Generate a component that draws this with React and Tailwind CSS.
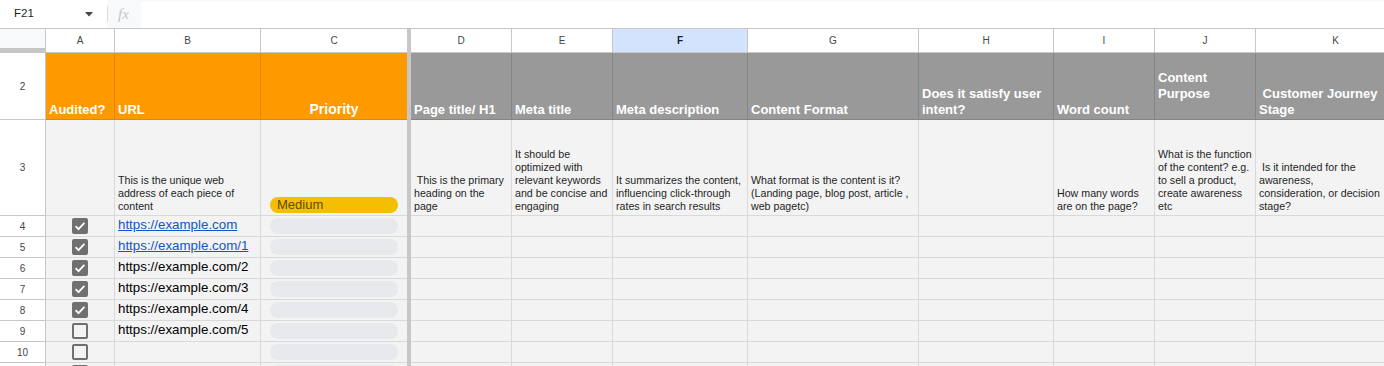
import React from "react";

const FONT = { fontFamily: '"Liberation Sans", Arial, sans-serif' };

const cols = [
  { key: "A", w: "w-[69px]" },
  { key: "B", w: "w-[146px]" },
  { key: "C", w: "w-[146px]" },
  { key: "D", w: "w-[101px]" },
  { key: "E", w: "w-[101px]" },
  { key: "F", w: "w-[135px]" },
  { key: "G", w: "w-[171px]" },
  { key: "H", w: "w-[135px]" },
  { key: "I", w: "w-[101px]" },
  { key: "J", w: "w-[101px]" },
  { key: "K", w: "w-[160px]" },
];

const headers = {
  A: ["Audited?"],
  B: ["URL"],
  C: ["Priority"],
  D: ["Page title/ H1"],
  E: ["Meta title"],
  F: ["Meta description"],
  G: ["Content Format"],
  H: ["Does it satisfy user", "intent?"],
  I: ["Word count"],
  J: ["Content", "Purpose", " "],
  K: [" Customer Journey", "Stage"],
};

const notes = {
  A: [],
  B: ["This is the unique web", "address of each piece of", "content"],
  C: null,
  D: [" This is the primary", "heading on the", "page"],
  E: ["It should be", "optimized with", "relevant keywords", "and be concise and", "engaging"],
  F: ["It summarizes the content,", "influencing click-through", "rates in search results"],
  G: ["What format is the content is it?", "(Landing page, blog post, article ,", "web pagetc)"],
  H: [],
  I: ["How many words", "are on the page?"],
  J: ["What is the function", "of the content? e.g.", "to sell a product,", "create awareness", "etc"],
  K: [" Is it intended for the", "awareness,", "consideration, or decision", "stage?"],
};

const dataRows = [
  { n: 4, checked: true, url: "https://example.com", link: true },
  { n: 5, checked: true, url: "https://example.com/1", link: true },
  { n: 6, checked: true, url: "https://example.com/2" },
  { n: 7, checked: true, url: "https://example.com/3" },
  { n: 8, checked: true, url: "https://example.com/4" },
  { n: 9, checked: false, url: "https://example.com/5" },
  { n: 10, checked: false, url: "" },
  { n: "", checked: false, url: "" },
];

function Divider() {
  return <div className="w-[4px] shrink-0 bg-[#c7c7c7]" />;
}

function RowNum({ n, className = "" }) {
  return (
    <div
      className={`w-[46px] shrink-0 flex items-center justify-center bg-white border-r border-b border-[#c7c7c7] text-[10px] text-[#444746] ${className}`}
    >
      {n}
    </div>
  );
}

function Checkbox({ checked }) {
  if (checked) {
    return (
      <div className="w-[16px] h-[16px] rounded-[2px] bg-[#707070] flex items-center justify-center">
        <svg width="16" height="16" viewBox="0 0 16 16">
          <path d="M3.6 8.2l2.9 2.9 5.9-6.2" fill="none" stroke="white" strokeWidth="1.8" />
        </svg>
      </div>
    );
  }
  return <div className="w-[16px] h-[16px] rounded-[2px] border-2 border-[#707070] bg-transparent" />;
}

export default function App() {
  return (
    <div className="w-[1384px] h-[366px] overflow-hidden bg-white text-black" style={FONT}>
      {/* Formula bar */}
      <div className="h-[29px] flex border-b border-[#c7c7c7] bg-white">
        <div className="w-[107px] shrink-0 flex items-center pl-[14px] pr-[14px] justify-between">
          <span className="text-[11.5px] text-[#1f1f1f]">F21</span>
          <svg width="8" height="5" viewBox="0 0 8 5" className="mt-[1px]">
            <path d="M0 0h8L4 4.5z" fill="#444746" />
          </svg>
        </div>
        <div className="flex-1 flex bg-[#f8f9fa]">
          <div className="w-[34px] shrink-0 flex items-center relative">
            <div className="w-[1px] h-[16px] bg-[#dadce0]" />
            <span
              className="ml-[10px] text-[15px] italic text-[#c4c4c4]"
              style={{ fontFamily: '"Liberation Serif", "Times New Roman", serif' }}
            >
              fx
            </span>
          </div>
          <div className="flex-1 mt-[2px] bg-white" />
        </div>
      </div>

      {/* Column headers */}
      <div className="h-[24px] flex">
        <div className="w-[46px] shrink-0 flex flex-col border-r border-[#c7c7c7]">
          <div className="flex-1 bg-[#f8f9fa]" />
          <div className="h-[4px] bg-[#c4c7c5]" />
          <div className="h-[1px] bg-[#c7c7c7]" />
        </div>
        {cols.map((c, i) => (
          <React.Fragment key={c.key}>
            {i === 3 && <Divider />}
            <div
              className={`${c.w} shrink-0 flex items-center justify-center border-b border-[#c7c7c7] text-[10px] ${
                c.key === "C" ? "" : "border-r"
              } ${c.key === "F" ? "bg-[#d3e3fd] font-bold text-[#0b1d45]" : "bg-white text-[#444746]"}`}
            >
              {c.key}
            </div>
          </React.Fragment>
        ))}
      </div>

      {/* Row 2: headers */}
      <div className="h-[67px] flex">
        <RowNum n={2} />
        {cols.map((c, i) => {
          const orange = i < 3;
          const isPriority = c.key === "C";
          return (
            <React.Fragment key={c.key}>
              {i === 3 && <Divider />}
              <div
                className={`${c.w} shrink-0 flex flex-col justify-end pb-[1px] px-[3px] border-b font-bold text-white overflow-hidden ${
                  orange ? "bg-[#ff9900] border-[#e08700]" : "bg-[#999999] border-[#858585]"
                } ${isPriority ? "" : "border-r"}`}
              >
                {headers[c.key].map((line, j) => (
                  <div
                    key={j}
                    className={`whitespace-pre ${
                      isPriority ? "text-[14px] leading-[18px] text-center" : "text-[13px] leading-[16px]"
                    }`}
                  >
                    {line}
                  </div>
                ))}
              </div>
            </React.Fragment>
          );
        })}
      </div>

      {/* Row 3: descriptions */}
      <div className="h-[96px] flex">
        <RowNum n={3} />
        {cols.map((c, i) => (
          <React.Fragment key={c.key}>
            {i === 3 && <Divider />}
            <div
              className={`${c.w} shrink-0 flex flex-col justify-end bg-[#f3f3f3] border-b border-[#d9d9d9] overflow-hidden ${
                c.key === "C" ? "pb-[2px] px-[9px]" : "border-r pb-[2px] px-[3px]"
              }`}
            >
              {c.key === "C" ? (
                <div className="h-[16px] rounded-full bg-[#f4bf00] flex items-center pl-[7px] text-[13px] text-[#5f4b00]">
                  Medium
                </div>
              ) : (
                notes[c.key].map((line, j) => (
                  <div key={j} className="whitespace-pre text-[10.67px] leading-[13px] text-[#1f1f1f]">
                    {line}
                  </div>
                ))
              )}
            </div>
          </React.Fragment>
        ))}
      </div>

      {/* Data rows */}
      {dataRows.map((r, idx) => (
        <div key={idx} className="h-[21px] flex">
          <RowNum n={r.n} />
          {cols.map((c, i) => {
            let content = null;
            let extra = "";
            if (c.key === "A") {
              content = <Checkbox checked={r.checked} />;
              extra = "items-center justify-center";
            } else if (c.key === "B") {
              extra = "items-end pb-[3px] px-[3px]";
              content = r.url ? (
                <span
                  className={`text-[13.33px] leading-[16px] whitespace-pre ${
                    r.link ? "text-[#1155cc] underline" : "text-black"
                  }`}
                >
                  {r.url}
                </span>
              ) : null;
            } else if (c.key === "C") {
              extra = "items-center px-[9px]";
              content = <div className="w-full h-[16px] rounded-full bg-[#e8e9ec]" />;
            }
            return (
              <React.Fragment key={c.key}>
                {i === 3 && <Divider />}
                <div
                  className={`${c.w} shrink-0 flex bg-[#f3f3f3] border-b border-[#d9d9d9] overflow-hidden ${
                    c.key === "C" ? "" : "border-r"
                  } ${extra}`}
                >
                  {content}
                </div>
              </React.Fragment>
            );
          })}
        </div>
      ))}
    </div>
  );
}
